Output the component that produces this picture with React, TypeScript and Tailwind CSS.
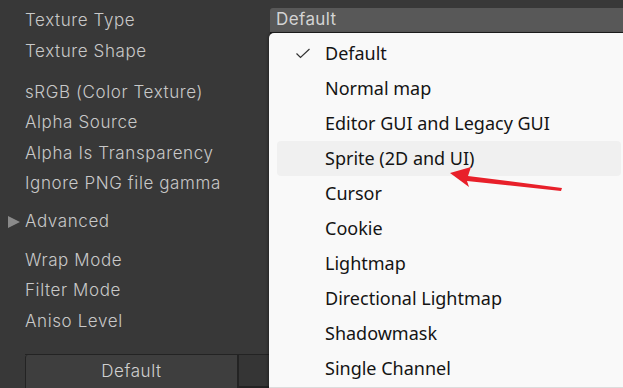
const labelFont = { fontFamily: "Inter, 'Liberation Sans', sans-serif" };

const menuItems = [
  "Default",
  "Normal map",
  "Editor GUI and Legacy GUI",
  "Sprite (2D and UI)",
  "Cursor",
  "Cookie",
  "Lightmap",
  "Directional Lightmap",
  "Shadowmask",
  "Single Channel",
];

function Label({ text, tall }: { text: string; tall?: boolean }) {
  return (
    <div
      className={`${tall ? "h-[31px]" : "h-[30px]"} flex items-center pt-[4px] pl-[25px] text-[17px] font-light tracking-[0.6px] text-[#c8c8c8]`}
      style={labelFont}
    >
      {text}
    </div>
  );
}

export default function App() {
  return (
    <div className="relative w-[623px] h-[388px] overflow-hidden bg-[#383838]">
      <div className="pt-[5px]">
        <div className="h-[30px] flex items-center">
          <div
            className="w-[270px] pl-[25px] pt-[2px] text-[17px] font-light tracking-[0.6px] text-[#c8c8c8]"
            style={labelFont}
          >
            Texture Type
          </div>
          <div
            className="flex-1 h-[26px] mt-[2px] flex items-center pl-[6px] bg-[#585858] border-b-2 border-[#1f1f1f] rounded-tl-[3px] text-[17px] tracking-[0.4px] text-[#d4d4d4]"
            style={labelFont}
          >
            Default
          </div>
        </div>
        <Label text="Texture Shape" />
        <div className="h-[11px]" />
        <Label text="sRGB (Color Texture)" />
        <Label text="Alpha Source" />
        <Label text="Alpha Is Transparency" tall />
        <Label text="Ignore PNG file gamma" />
        <div className="h-[8px]" />
        <div
          className="h-[30px] flex items-center pt-[4px] text-[17px] font-light tracking-[0.6px] text-[#c8c8c8]"
          style={labelFont}
        >
          <svg width="25" height="14" viewBox="0 0 25 14">
            <polygon points="8,1 20,7 8,13" fill="#8a8a8a" />
          </svg>
          Advanced
        </div>
        <div className="h-[9px]" />
        <Label text="Wrap Mode" />
        <Label text="Filter Mode" />
        <Label text="Aniso Level" tall />
        <div className="h-[19px]" />
        <div className="flex h-[34px] ml-[25px] border-t border-[#232323]">
          <div
            className="w-[212px] flex items-center justify-center bg-[#3e3e3e] border-l border-[#232323] rounded-tl-[3px] text-[17px] font-light tracking-[0.6px] text-[#d0d0d0]"
            style={labelFont}
          >
            Default
          </div>
          <div className="flex-1 bg-[#353535] border-l-2 border-b-2 border-[#232323]" />
        </div>
      </div>

      <div
        className="absolute left-[269px] top-[33px] right-0 bottom-0 bg-[#f9f9f9] rounded-tl-[5px] border-b border-[#dcdcdc] shadow-[-1px_0_3px_rgba(0,0,0,0.35)] pl-[8px] pr-[2px] pt-[3px]"
        style={{ fontFamily: "'Noto Sans', 'Open Sans', sans-serif" }}
      >
        {menuItems.map((item, i) => (
          <div
            key={item}
            className={`h-[35px] flex items-center rounded-[4px] text-[18px] text-[#141414] ${i === 3 ? "bg-[#f0f0f0]" : ""}`}
          >
            <div className="w-[48px] flex justify-center pl-[3px]">
              {i === 0 && (
                <svg width="16" height="12" viewBox="0 0 16 12">
                  <path d="M1.5 5.5 L5.5 9.5 L14.5 1" fill="none" stroke="#333" strokeWidth="1.2" />
                </svg>
              )}
            </div>
            <span>{item}</span>
          </div>
        ))}
      </div>

      <svg className="absolute left-0 top-0 pointer-events-none" width="623" height="388" viewBox="0 0 623 388">
        <polygon
          points="450,173 471,167 468,176 562,188 561,191 467,181 469,187"
          fill="#e8202a"
        />
      </svg>
    </div>
  );
}
